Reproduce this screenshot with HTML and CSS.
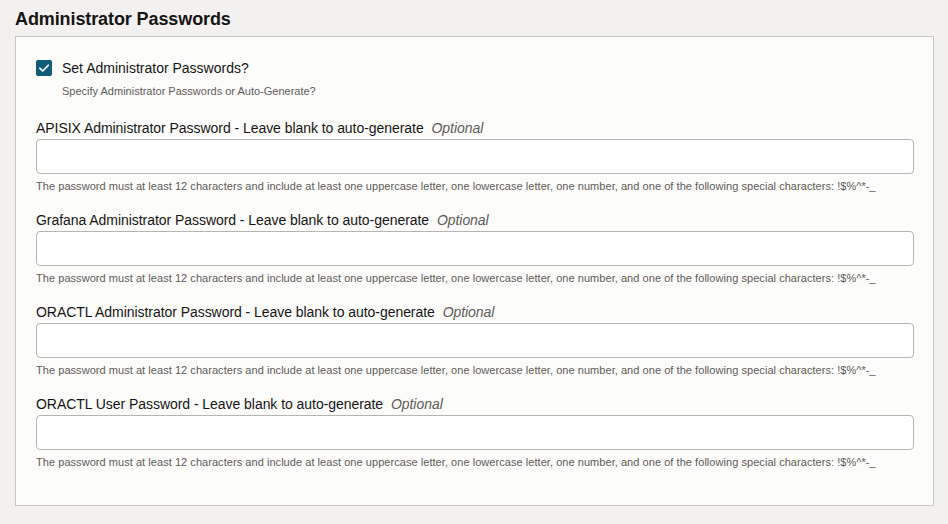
FILE: index.html
```html
<!DOCTYPE html>
<html lang="en">
<head>
<meta charset="utf-8">
<title>Administrator Passwords</title>
<link rel="stylesheet" href="styles.css">
</head>
<body>
<h1 class="title">Administrator Passwords</h1>
<section class="panel">
  <div class="check-row">
    <span class="checkbox" role="checkbox" aria-checked="true">
      <svg viewBox="0 0 16 16" width="16" height="16"><path d="M3.8 8.2 L6.7 11 L12.3 5.2" fill="none" stroke="#fff" stroke-width="1.6" stroke-linecap="round" stroke-linejoin="round"/></svg>
    </span>
    <div class="check-text">
      <div class="check-label">Set Administrator Passwords?</div>
      <div class="check-help">Specify Administrator Passwords or Auto-Generate?</div>
    </div>
  </div>

  <div class="field">
    <label class="field-label">APISIX Administrator Password - Leave blank to auto-generate <span class="optional">Optional</span></label>
    <input class="field-input" type="password">
    <div class="field-help">The password must at least 12 characters and include at least one uppercase letter, one lowercase letter, one number, and one of the following special characters: !$%^*-_</div>
  </div>

  <div class="field">
    <label class="field-label">Grafana Administrator Password - Leave blank to auto-generate <span class="optional">Optional</span></label>
    <input class="field-input" type="password">
    <div class="field-help">The password must at least 12 characters and include at least one uppercase letter, one lowercase letter, one number, and one of the following special characters: !$%^*-_</div>
  </div>

  <div class="field">
    <label class="field-label">ORACTL Administrator Password - Leave blank to auto-generate <span class="optional">Optional</span></label>
    <input class="field-input" type="password">
    <div class="field-help">The password must at least 12 characters and include at least one uppercase letter, one lowercase letter, one number, and one of the following special characters: !$%^*-_</div>
  </div>

  <div class="field">
    <label class="field-label">ORACTL User Password - Leave blank to auto-generate <span class="optional">Optional</span></label>
    <input class="field-input" type="password">
    <div class="field-help">The password must at least 12 characters and include at least one uppercase letter, one lowercase letter, one number, and one of the following special characters: !$%^*-_</div>
  </div>
</section>
</body>
</html>
```

FILE: styles.css
```css
* { box-sizing: border-box; }

html, body {
  margin: 0;
  background: #f2f1f0;
}

body {
  padding: 8px 14px 0 15px;
  font-family: "Liberation Sans", Arial, Helvetica, sans-serif;
  color: #161513;
}

.title {
  margin: 0 0 6px 0;
  font-size: 18px;
  line-height: 22px;
  font-weight: bold;
  letter-spacing: -0.1px;
  color: #161513;
}

.panel {
  height: 470px;
  background: #fcfcfb;
  border: 1px solid #c9c5c0;
  padding: 23px 19px 0 20px;
}

.check-row {
  display: flex;
  align-items: flex-start;
  gap: 10px;
}

.checkbox {
  flex: none;
  width: 16px;
  height: 16px;
  border-radius: 2px;
  background: #0f5c79;
  display: flex;
  align-items: center;
  justify-content: center;
}

.checkbox svg { display: block; }

.check-label {
  font-size: 14px;
  line-height: 17px;
}

.check-help {
  margin-top: 7px;
  font-size: 11px;
  line-height: 14px;
  color: #5e5b58;
}

.field {
  margin-top: 19px;
  display: flex;
  flex-direction: column;
}

.check-row + .field { margin-top: 22px; }

.field-label {
  font-size: 14px;
  line-height: 17px;
  letter-spacing: -0.05px;
  color: #161513;
}

.optional {
  font-style: italic;
  color: #5e5b58;
  margin-left: 4px;
}

.field-input {
  margin-top: 2px;
  height: 35px;
  width: 100%;
  border: 1px solid #b8b4af;
  border-radius: 4px;
  background: #ffffff;
  padding: 0 8px;
  font: inherit;
}

.field-help {
  margin-top: 5px;
  font-size: 11px;
  line-height: 14px;
  color: #5e5b58;
  letter-spacing: 0.05px;
}
```
